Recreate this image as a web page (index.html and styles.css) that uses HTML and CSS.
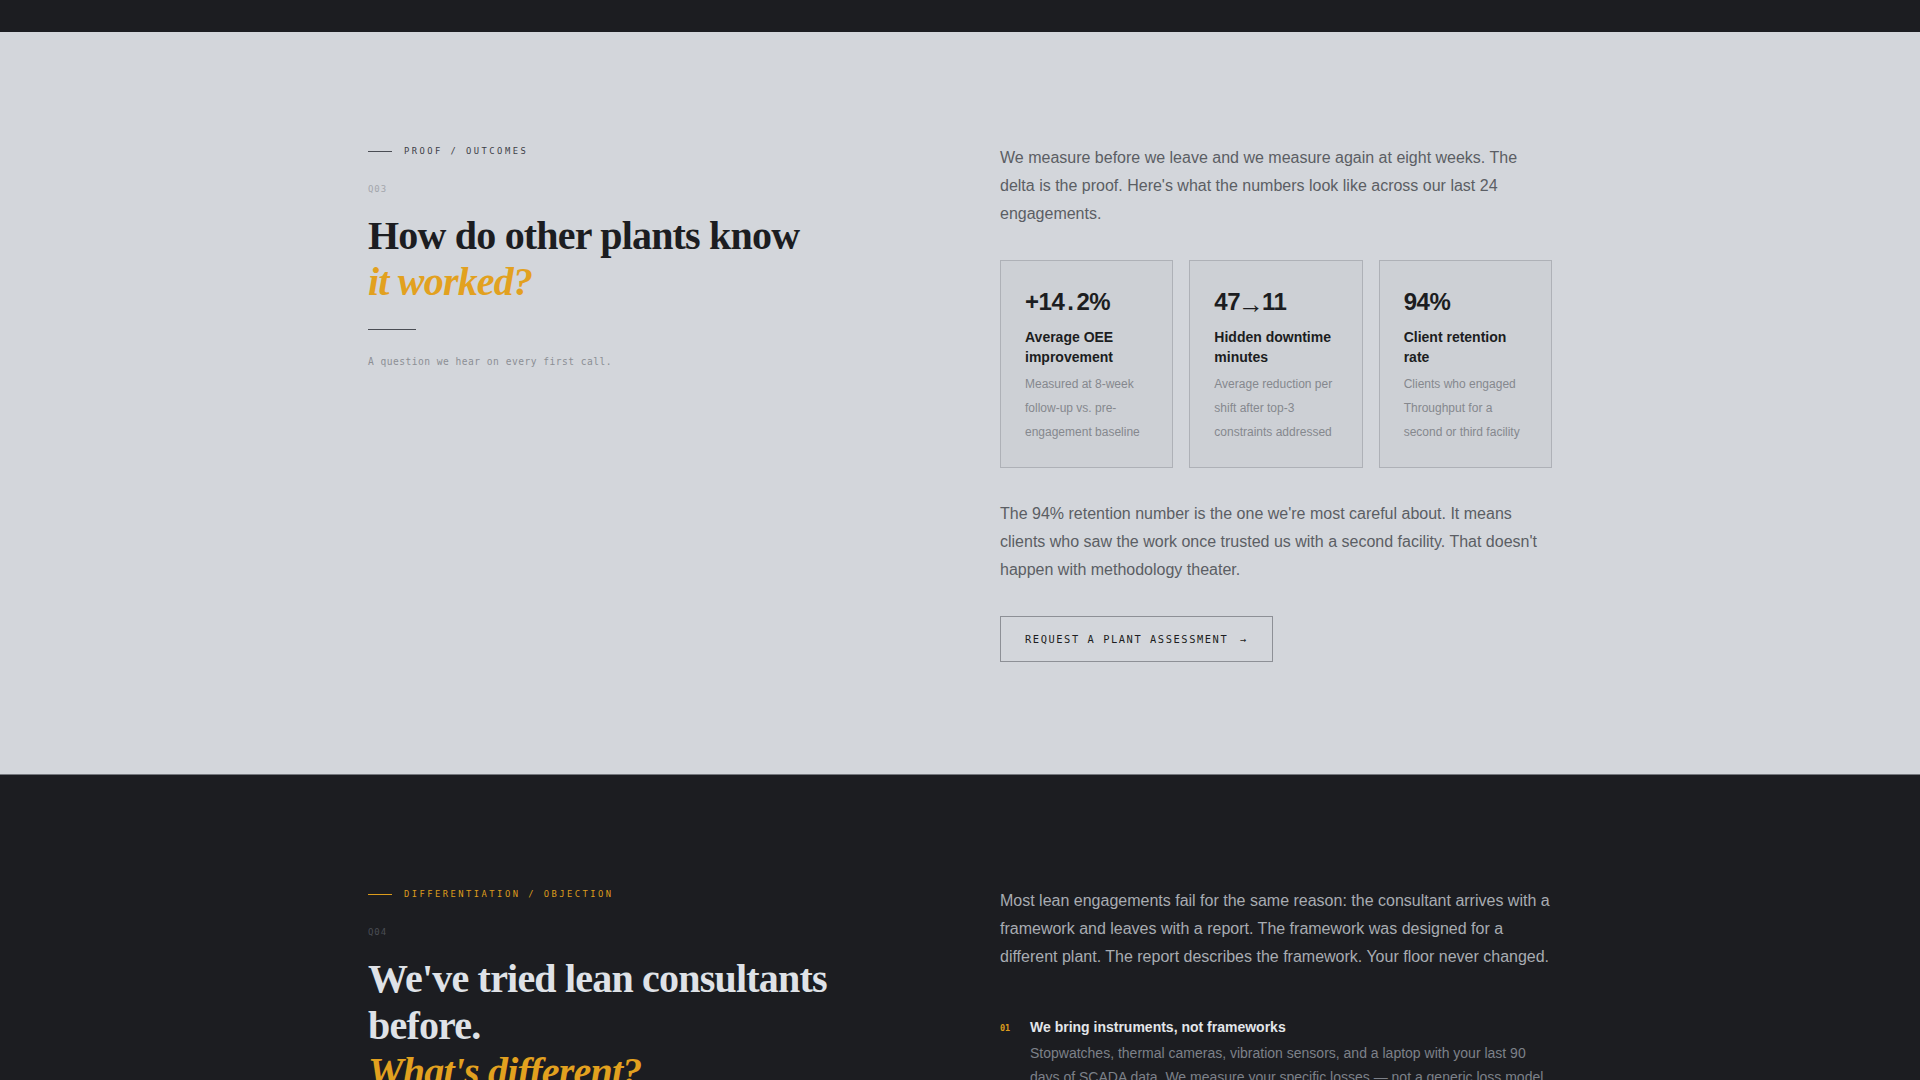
FILE: index.html
```html
<!DOCTYPE html>
<html lang="en">
<head>
    <meta charset="UTF-8">
    <meta name="viewport" content="width=device-width, initial-scale=1.0">
    <title>Proof / Outcomes</title>
    <link rel="stylesheet" href="styles.css">
</head>
<body>
    <div class="topbar"></div>

    <section class="block block-light">
        <div class="wrap split">
            <div class="intro">
                <div class="eyebrow"><span class="eyebrow-line"></span>Proof / Outcomes</div>
                <div class="qnum">Q03</div>
                <h2 class="title">How do other plants know <em>it worked?</em></h2>
                <div class="rule"></div>
                <p class="aside">A question we hear on every first call.</p>
            </div>
            <div class="content">
                <p class="lead">We measure before we leave and we measure again at eight weeks. The delta is the proof. Here's what the numbers look like across our last 24 engagements.</p>

                <div class="stats">
                    <div class="stat">
                        <div class="stat-value">+14<span class="dot">.</span>2%</div>
                        <div class="stat-label">Average OEE improvement</div>
                        <div class="stat-note">Measured at 8-week follow-up vs. pre-engagement baseline</div>
                    </div>
                    <div class="stat">
                        <div class="stat-value">47<span class="arrow">→</span>11</div>
                        <div class="stat-label">Hidden downtime minutes</div>
                        <div class="stat-note">Average reduction per shift after top-3 constraints addressed</div>
                    </div>
                    <div class="stat">
                        <div class="stat-value">94%</div>
                        <div class="stat-label">Client retention rate</div>
                        <div class="stat-note">Clients who engaged Throughput for a second or third facility</div>
                    </div>
                </div>

                <p class="lead">The 94% retention number is the one we're most careful about. It means clients who saw the work once trusted us with a second facility. That doesn't happen with methodology theater.</p>

                <a class="btn" href="#">Request a plant assessment <span class="btn-arrow">→</span></a>
            </div>
        </div>
    </section>

    <section class="block block-dark">
        <div class="wrap split">
            <div class="intro">
                <div class="eyebrow"><span class="eyebrow-line"></span>Differentiation / Objection</div>
                <div class="qnum">Q04</div>
                <h2 class="title">We've tried lean consultants before. <em>What's different?</em></h2>
                <div class="rule"></div>
                <p class="aside">Fair. Most of them were selling a binder.</p>
            </div>
            <div class="content">
                <p class="lead">Most lean engagements fail for the same reason: the consultant arrives with a framework and leaves with a report. The framework was designed for a different plant. The report describes the framework. Your floor never changed.</p>

                <ol class="points">
                    <li class="point">
                        <span class="point-num">01</span>
                        <div>
                            <h3 class="point-title">We bring instruments, not frameworks</h3>
                            <p class="point-text">Stopwatches, thermal cameras, vibration sensors, and a laptop with your last 90 days of SCADA data. We measure your specific losses — not a generic loss model borrowed from someone else's line.</p>
                        </div>
                    </li>
                    <li class="point">
                        <span class="point-num">02</span>
                        <div>
                            <h3 class="point-title">We stay on the floor until it moves</h3>
                            <p class="point-text">Every fix is piloted on one line, on your shifts, with your operators. If the number doesn't move, we don't roll it out.</p>
                        </div>
                    </li>
                    <li class="point">
                        <span class="point-num">03</span>
                        <div>
                            <h3 class="point-title">We come back at eight weeks</h3>
                            <p class="point-text">Same instruments, same stations. The follow-up measurement is in the contract, not an upsell.</p>
                        </div>
                    </li>
                </ol>
            </div>
        </div>
    </section>
</body>
</html>
```

FILE: styles.css
```css
body {
    margin: 0;
    font-family: "Liberation Sans", Arial, sans-serif;
    background-color: #1c1d21;
    color: #1c1d21;
}

.topbar {
    height: 32px;
    background-color: #1c1d21;
}

.block {
    padding: 112px 0;
}

.block-light {
    background-color: #d3d6db; /* cool grey paper */
}

.block-dark {
    background-color: #1c1d21;
    border-top: 1px solid #74777d;
}

.wrap {
    max-width: 1184px;
    margin: 0 auto;
}

.split {
    display: grid;
    grid-template-columns: 1fr 1fr;
    gap: 80px;
}

/* left column */

.eyebrow {
    display: flex;
    align-items: center;
    gap: 12px;
    font-family: "DejaVu Sans Mono", monospace;
    font-size: 8.8px;
    letter-spacing: 0.28em;
    text-transform: uppercase;
    color: #3e4148;
    line-height: 14px;
}

.eyebrow-line {
    width: 24px;
    height: 1px;
    background-color: #4a4d54;
}

.qnum {
    font-family: "DejaVu Sans Mono", monospace;
    font-size: 9px;
    letter-spacing: 0.1em;
    color: #a3a6ac;
    margin-top: 24px;
    line-height: 14px;
}

.title {
    font-family: "Liberation Serif", "Times New Roman", serif;
    font-size: 40px;
    font-weight: bold;
    letter-spacing: -0.02em;
    line-height: 1.16;
    margin: 17px 0 0;
    color: #1c1d21;
}

.title em {
    display: block;
    color: #e2a11f;
}

.rule {
    width: 48px;
    height: 1px;
    background-color: #4a4d54;
    margin-top: 23px;
}

.aside {
    font-family: "DejaVu Sans Mono", monospace;
    font-size: 9.6px;
    letter-spacing: 0.05em;
    color: #8c8f95;
    margin: 26px 0 0;
}

/* right column */

.lead {
    font-size: 16px;
    line-height: 1.76;
    color: #5b5e64;
    margin: 0;
}

.stats {
    display: grid;
    grid-template-columns: repeat(3, 1fr);
    gap: 16px;
    margin: 32px 0;
}

.stat {
    background-color: #cdd0d5;
    border: 1px solid #aeb1b7;
    padding: 29px 24px 23px;
}

.stat-value {
    font-size: 24px;
    font-weight: bold;
    letter-spacing: -0.02em;
    line-height: 1;
}

.stat-value .dot {
    margin: 0 3px;
}

.stat-value .arrow {
    font-size: 26px;
    line-height: 0;
    letter-spacing: 0;
    margin: 0 -2px;
    vertical-align: -3px;
}

.stat-label {
    font-size: 14px;
    font-weight: bold;
    line-height: 1.4;
    margin-top: 14px;
}

.stat-note {
    font-size: 12px;
    line-height: 2;
    color: #85888e;
    margin-top: 4px;
}

.btn {
    display: inline-block;
    margin-top: 32px;
    padding: 16px 24px;
    border: 1px solid #8d9096;
    font-family: "DejaVu Sans Mono", monospace;
    font-size: 10.4px;
    letter-spacing: 0.15em;
    text-transform: uppercase;
    color: #1c1d21;
    text-decoration: none;
    line-height: 12px;
}

.btn-arrow {
    margin-left: 4px;
}

/* dark variant */

.block-dark .eyebrow {
    color: #dc9c1c;
}

.block-dark .eyebrow-line {
    background-color: #dc9c1c;
}

.block-dark .qnum {
    color: #4a4d54;
}

.block-dark .title {
    color: #dfe2e7;
}

.block-dark .rule {
    background-color: #5a5d63;
}

.block-dark .aside {
    color: #6b6e74;
}

.block-dark .lead {
    color: #a8acb2;
}

.points {
    list-style: none;
    padding: 0;
    margin: 46px 0 0;
}

.point {
    display: flex;
    gap: 16px;
    margin-bottom: 28px;
}

.point-num {
    width: 14px;
    flex-shrink: 0;
    font-family: "DejaVu Sans Mono", monospace;
    font-size: 8.5px;
    font-weight: bold;
    color: #dc9c1c;
    line-height: 20px;
}

.point-title {
    font-size: 14px;
    font-weight: bold;
    line-height: 1.4;
    color: #e3e6ea;
    margin: 0;
}

.point-text {
    font-size: 14px;
    line-height: 1.72;
    color: #7d8189;
    margin: 4px 0 0;
}
```
